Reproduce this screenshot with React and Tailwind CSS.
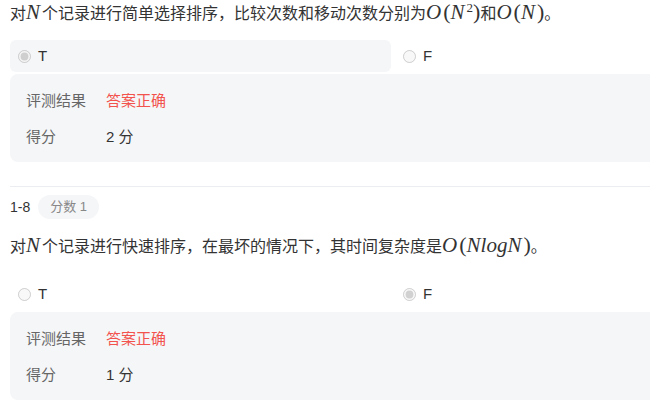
import React from 'react';

const sans = { fontFamily: '"Liberation Sans", "Noto Sans CJK SC", sans-serif' };

// math bits, roughly KaTeX-sized
const M = ({ children }) => (
  <span className="font-['Liberation_Serif'] italic text-[21px] leading-6 pr-[2px]">{children}</span>
);
const P = ({ children }) => (
  <span className="font-['Liberation_Serif'] text-[22px] leading-6">{children}</span>
);

const Option = ({ label, checked, shaded, name }) => (
  <label
    className={`flex items-center gap-[7px] h-8 px-2 rounded-md ${shaded ? 'bg-[#f5f6f8]' : ''}`}
  >
    <input type="radio" name={name} disabled checked={checked} readOnly className="w-[13px] h-[13px]" />
    <span className="text-[15px] text-[#333]">{label}</span>
  </label>
);

const Result = ({ score }) => (
  <div className="mt-[2px] bg-[#f5f6f8] rounded-lg px-4 pt-4 pb-[14px] flex flex-col gap-[14px] text-[15px] leading-[22px]">
    <div className="flex">
      <span className="w-20 text-[#666]">评测结果</span>
      <span className="text-[#f2534d]">答案正确</span>
    </div>
    <div className="flex">
      <span className="w-20 text-[#666]">得分</span>
      <span className="text-[#333]">{score} 分</span>
    </div>
  </div>
);

export default function App() {
  return (
    <div className="w-[650px] h-[401px] overflow-hidden bg-white" style={sans}>
      <div className="w-[766px] ml-[10px]">
        <div className="h-6 leading-6 text-[16px] text-[#333] whitespace-nowrap">
          对<M>N</M>个记录进行简单选择排序，比较次数和移动次数分别为<M>O</M><P>(</P><M>N</M><sup className="text-[13px] font-['Liberation_Serif'] -top-[7px]">2</sup><P>)</P>和<M>O</M><P>(</P><M>N</M><P>)</P>。
        </div>
        <div className="mt-4 grid grid-cols-2 gap-1">
          <Option name="q1" label="T" checked shaded />
          <Option name="q1" label="F" />
        </div>
        <Result score={2} />

        <div className="mt-6 border-t border-[#ebedf0]" />
        <div className="pt-2 flex items-center gap-2 h-8">
          <span className="text-[14px] text-[#333]">1-8</span>
          <span className="h-6 px-3 rounded-full bg-[#f5f6f8] text-[13px] text-[#888] flex items-center">分数 1</span>
        </div>

        <div className="mt-[14px] h-6 leading-6 text-[16px] text-[#333] whitespace-nowrap">
          对<M>N</M>个记录进行快速排序，在最坏的情况下，其时间复杂度是<M>O</M><P>(</P><M>NlogN</M><P>)</P>。
        </div>
        <div className="mt-[21px] grid grid-cols-2 gap-1">
          <Option name="q2" label="T" />
          <Option name="q2" label="F" checked />
        </div>
        <Result score={1} />
      </div>
    </div>
  );
}
